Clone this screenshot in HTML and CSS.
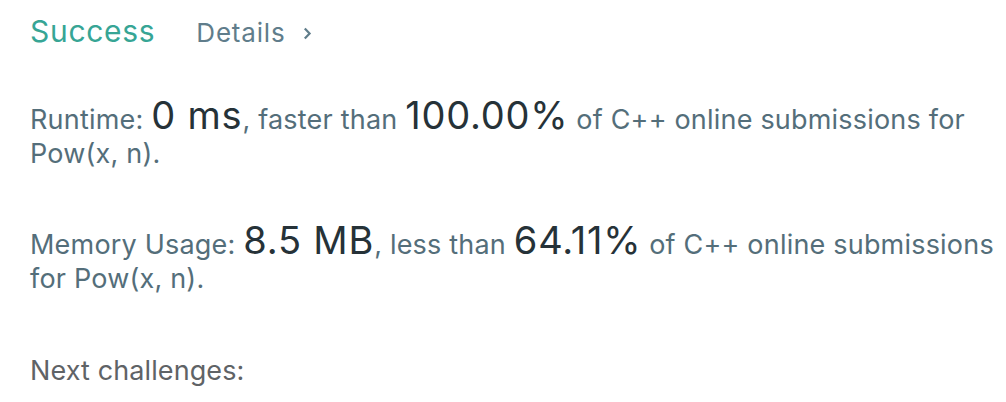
FILE: index.html
```html
<!DOCTYPE html>
<html>
<head>
<meta charset="utf-8">
<link rel="stylesheet" href="styles.css">
</head>
<body>
<div class="result">
  <div class="header">
    <span class="status">Success</span>
    <a class="details">Details <svg class="chev" width="9" height="13" viewBox="0 0 9 13"><path d="M1.8 1.4 L6.6 6.5 L1.8 11.6" fill="none" stroke="#607d8b" stroke-width="2.2"/></svg></a>
  </div>
  <p class="stat">Runtime: <span class="big">0 ms</span>, faster than <span class="big">100.00%</span> of C++ online submissions for Pow(x, n).</p>
  <p class="stat">Memory Usage: <span class="big">8.5 MB</span>, less than <span class="big">64.11%</span> of C++ online submissions for Pow(x, n).</p>
  <p class="next">Next challenges:</p>
</div>
</body>
</html>
```

FILE: styles.css
```css
html, body {
  margin: 0;
  padding: 0;
  background: #ffffff;
}
body {
  font-family: Inter, "Open Sans", sans-serif;
}
.result {
  padding: 11px 0 0 30px;
}
.header {
  display: flex;
  align-items: baseline;
  gap: 41px;
  height: 40px;
  line-height: 40px;
}
.status {
  font-size: 30px;
  letter-spacing: 0.7px;
  color: #37a595;
}
.details {
  font-size: 26px;
  letter-spacing: 0.8px;
  color: #607d8b;
  display: flex;
  align-items: center;
  gap: 18px;
}
.stat {
  margin: 47px 0 0;
  font-size: 27px;
  line-height: 34px;
  letter-spacing: 0.2px;
  color: #546e7a;
}
.stat + .stat {
  margin-top: 52px;
}
.big {
  font-size: 38px;
  letter-spacing: 0.8px;
  color: #263238;
}
.next {
  margin: 58px 0 0;
  font-size: 27px;
  line-height: 34px;
  letter-spacing: 0.1px;
  color: #5f6366;
}
```
